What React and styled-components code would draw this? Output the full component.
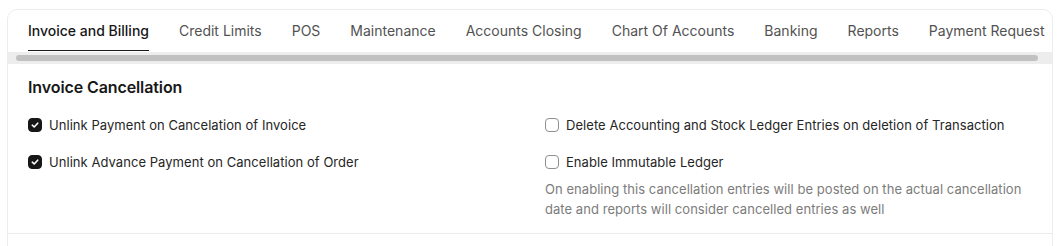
import React from 'react';
import styled, { createGlobalStyle } from 'styled-components';

const tabs = [
  'Invoice and Billing',
  'Credit Limits',
  'POS',
  'Maintenance',
  'Accounts Closing',
  'Chart Of Accounts',
  'Banking',
  'Reports',
  'Payment Request',
];

const leftFields = [
  { label: 'Unlink Payment on Cancelation of Invoice', checked: true },
  { label: 'Unlink Advance Payment on Cancellation of Order', checked: true },
];

const rightFields = [
  { label: 'Delete Accounting and Stock Ledger Entries on deletion of Transaction', checked: false },
  {
    label: 'Enable Immutable Ledger',
    checked: false,
    description:
      'On enabling this cancellation entries will be posted on the actual cancellation date and reports will consider cancelled entries as well',
  },
];

function Check({ field }) {
  return (
    <Field>
      <CheckRow>
        <Box checked={field.checked}>
          {field.checked && (
            <svg width="10" height="10" viewBox="0 0 10 10">
              <path d="M2.3 5.2 L4.2 7 L7.7 3.2" fill="none" stroke="#fff" strokeWidth="1.6" strokeLinecap="round" strokeLinejoin="round" />
            </svg>
          )}
        </Box>
        <Label>{field.label}</Label>
      </CheckRow>
      {field.description && <Description>{field.description}</Description>}
    </Field>
  );
}

function App() {
  return (
    <Page>
      <GlobalStyle />
      <Card>
        <TabBar>
          {tabs.map((t, i) => (
            <Tab key={t} active={i === 0}>{t}</Tab>
          ))}
        </TabBar>
        <ScrollTrack>
          <ScrollThumb />
        </ScrollTrack>

        <Section>
          <Heading>Invoice Cancellation</Heading>
          <Columns>
            <Column>
              {leftFields.map((f) => <Check key={f.label} field={f} />)}
            </Column>
            <Column>
              {rightFields.map((f) => <Check key={f.label} field={f} />)}
            </Column>
          </Columns>
        </Section>
        <Section empty />
      </Card>
    </Page>
  );
}

const GlobalStyle = createGlobalStyle`
  body {
    margin: 0;
    background: #fff;
    font-family: Inter, "Liberation Sans", sans-serif;
    color: #171717;
  }
`;

const Page = styled.div`
  padding: 9px 8px 0 7px;
  height: 246px;
  box-sizing: border-box;
  overflow: hidden;
`;

const Card = styled.div`
  border: 1px solid #ececec;
  border-radius: 10px 10px 0 0;
  height: 300px;
  overflow: hidden;
`;

const TabBar = styled.div`
  display: flex;
  gap: 30px;
  padding: 0 20px 1px;
  overflow: hidden;
  white-space: nowrap;
`;

const Tab = styled.div`
  flex-shrink: 0;
  padding: 11px 0 9px;
  font-size: 14px;
  line-height: 20px;
  font-weight: ${(props) => props.active ? 500 : 400};
  color: ${(props) => props.active ? '#171717' : '#525252'};
  border-bottom: 1px solid ${(props) => props.active ? '#171717' : 'transparent'};
`;

const ScrollTrack = styled.div`
  height: 12px;
  padding: 3px 14px 3px 8px;
  box-sizing: border-box;
  background: #ededed;
`;

const ScrollThumb = styled.div`
  height: 6px;
  border-radius: 3px;
  background: #c1c1c1;
`;

const Section = styled.div`
  padding: 11px 20px 14px;
  border-bottom: ${(props) => props.empty ? 'none' : '1px solid #ececec'};
  min-height: ${(props) => props.empty ? '60px' : 'auto'};
`;

const Heading = styled.h2`
  margin: 0 0 16px;
  font-size: 16px;
  line-height: 24px;
  font-weight: 600;
  letter-spacing: -0.1px;
  color: #171717;
`;

const Columns = styled.div`
  display: grid;
  grid-template-columns: 1fr 1fr;
  column-gap: 30px;
`;

const Column = styled.div`
  display: flex;
  flex-direction: column;
  gap: 17px;
`;

const Field = styled.div`
  display: flex;
  flex-direction: column;
`;

const CheckRow = styled.div`
  display: flex;
  align-items: center;
  gap: 7px;
  height: 20px;
`;

const Box = styled.span`
  width: 14px;
  height: 14px;
  box-sizing: border-box;
  border-radius: 4px;
  display: inline-flex;
  align-items: center;
  justify-content: center;
  flex-shrink: 0;
  background: ${(props) => props.checked ? '#171717' : '#fff'};
  border: 1px solid ${(props) => props.checked ? '#171717' : '#8f8f8f'};
`;

const Label = styled.span`
  font-size: 13px;
  line-height: 20px;
  letter-spacing: 0.05px;
  color: #262626;
`;

const Description = styled.p`
  margin: 7px 0 0;
  font-size: 13px;
  line-height: 20px;
  letter-spacing: 0.05px;
  color: #7c7c7c;
  max-width: 480px;
`;

export default App;
